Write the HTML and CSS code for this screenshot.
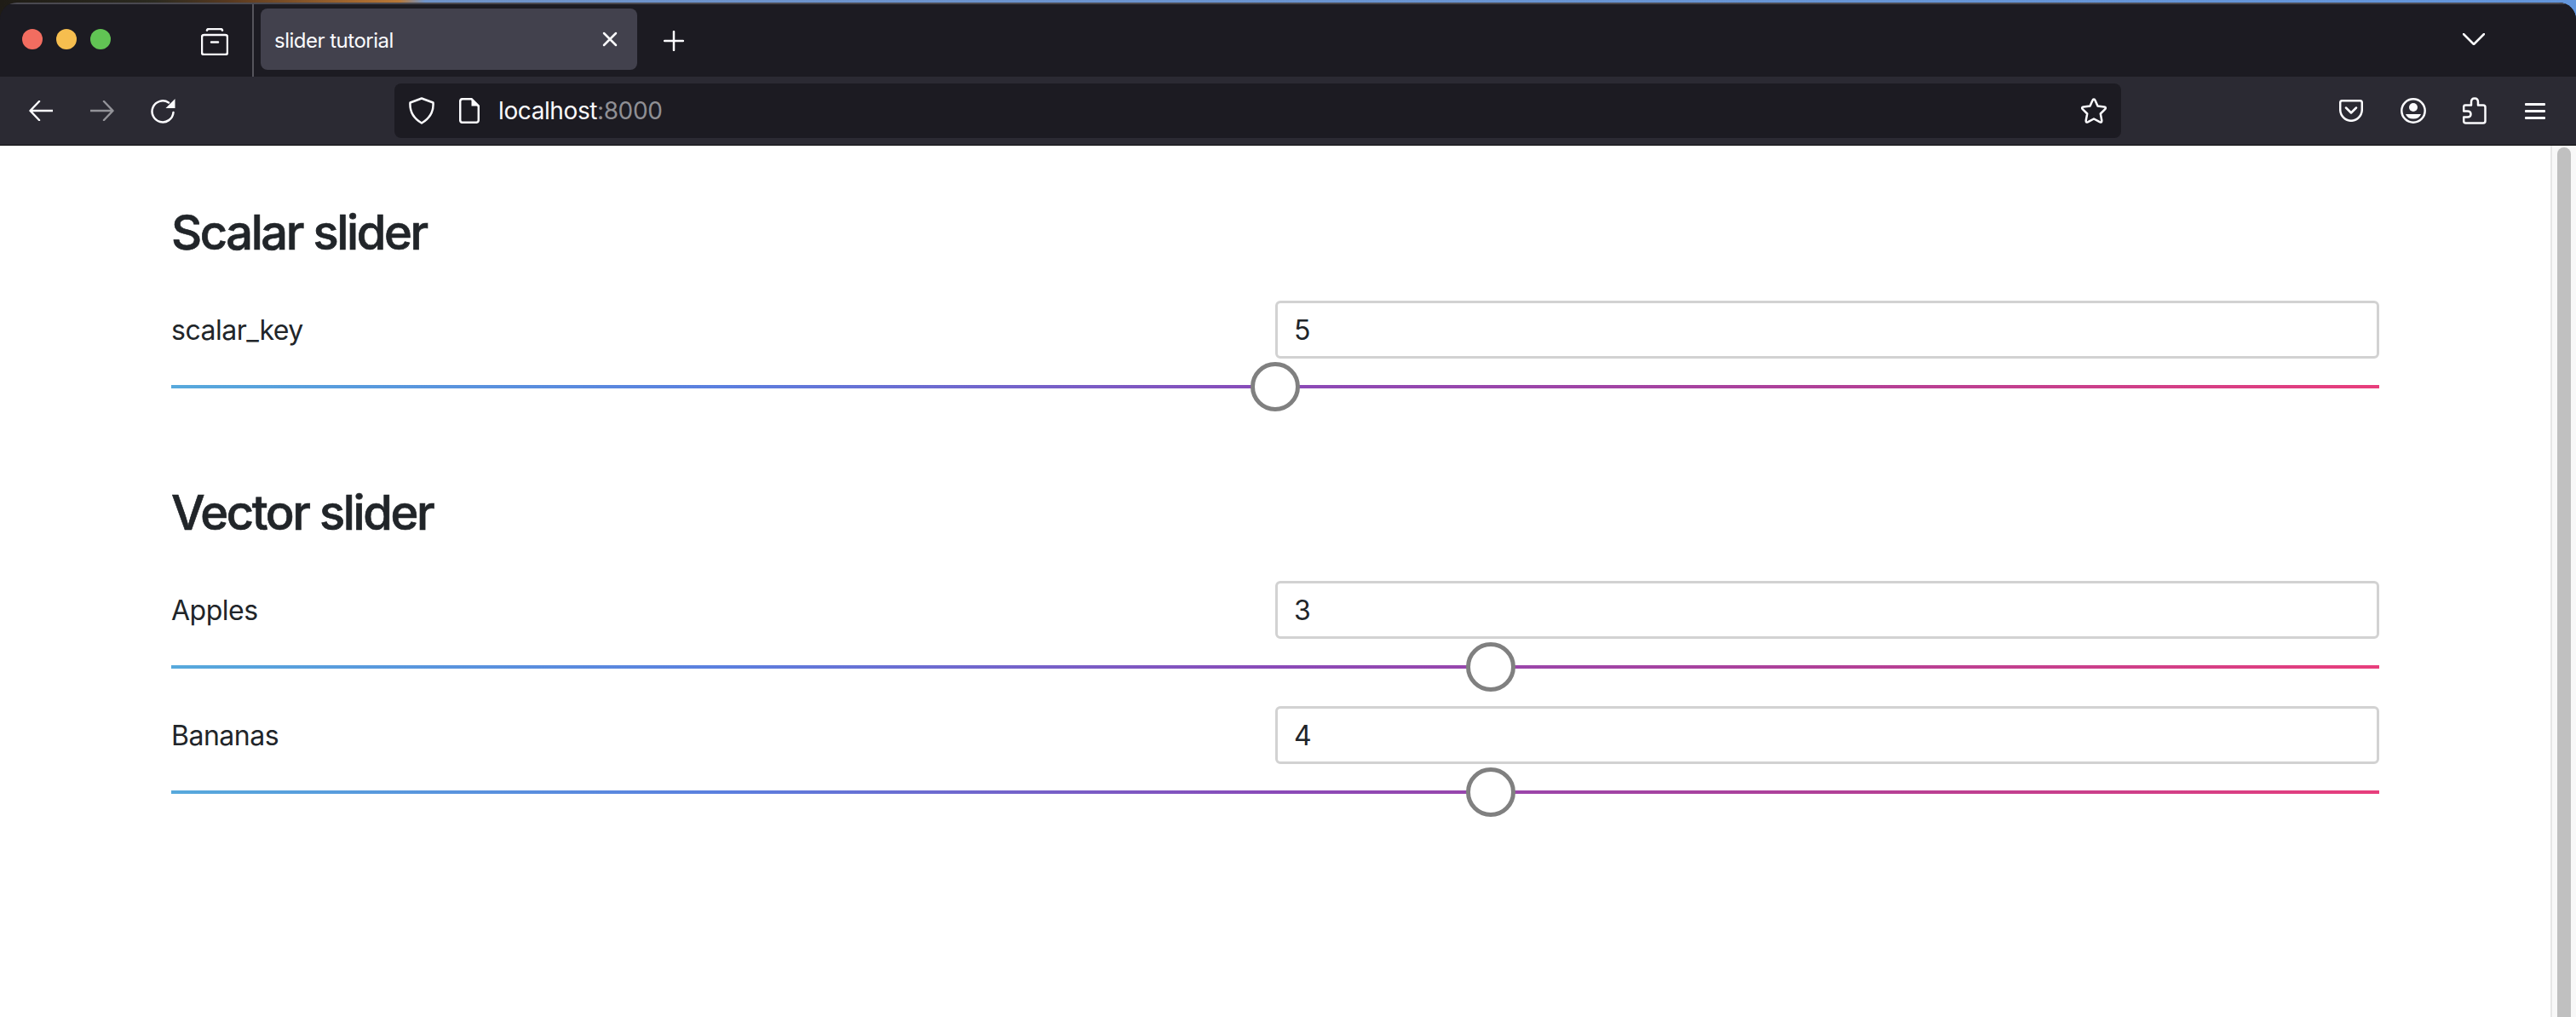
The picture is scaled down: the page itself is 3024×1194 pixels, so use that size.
FILE: index.html
```html
<!DOCTYPE html>
<html lang="en">
<head>
<meta charset="utf-8">
<title>slider tutorial</title>
<link rel="stylesheet" href="styles.css">
</head>
<body>
<div class="window">
  <header class="titlebar">
    <div class="lights">
      <span class="light red"></span>
      <span class="light yellow"></span>
      <span class="light green"></span>
    </div>
    <svg class="ico view" width="32" height="32" viewBox="0 0 32 32"><path d="M7 2.500Q7.500 1 9 1H23Q24.500 1 25 2.500M3.500 8H28.500Q31 8 31 10.500V28.500Q31 31 28.500 31H3.500Q1 31 1 28.500V10.500Q1 8 3.500 8ZM12 16.500H20" /></svg>
    <div class="tab">
      <span class="tab-title">slider tutorial</span>
      <svg class="ico tab-close" width="18" height="18" viewBox="0 0 18 18"><path d="M2 2L16 16M16 2L2 16"/></svg>
    </div>
    <svg class="ico newtab" width="24" height="24" viewBox="0 0 24 24"><path d="M12 1V23M1 12H23"/></svg>
    <svg class="ico tabs-menu" width="26" height="14" viewBox="0 0 26 14"><path d="M1 1L13 13L25 1"/></svg>
  </header>
  <nav class="toolbar">
    <svg class="ico back" width="28" height="24" viewBox="0 0 28 24"><path d="M28 12H2M12 1L1.500 12L12 23"/></svg>
    <svg class="ico forward dim" width="28" height="24" viewBox="0 0 28 24"><path d="M0 12H26M16 1L26.500 12L16 23"/></svg>
    <svg class="ico reload" width="30" height="30" viewBox="0 0 30 30"><path d="M26.500 17A12.500 12.500 0 1 1 21 5.500"/><path class="solid" d="M28.500 1V12H17.500Z"/></svg>
    <div class="urlbar">
      <svg class="ico shield" width="30" height="32" viewBox="0 0 30 32"><path d="M15 1.500L28.500 6.500Q29.500 22 15 30.500Q0.500 22 1.500 6.500Z"/></svg>
      <svg class="ico page" width="24" height="30" viewBox="0 0 24 30"><path d="M4 1.200H14.500L22.800 9.500V26Q22.800 28.800 20 28.800H4Q1.200 28.800 1.200 26V4Q1.200 1.200 4 1.200Z"/><path class="solid" d="M14.500 1.200L22.800 9.500H14.500Z"/></svg>
      <span class="url">localhost<span class="url-port">:8000</span></span>
      <svg class="ico star" width="32" height="32" viewBox="0 0 32 32"><path d="M16 2.500Q17 2.500 17.500 3.800L20.500 10.500L28.200 11.500Q31 12 29.200 14.200L23.800 19.500L25.300 27.500Q25.500 30.500 22.800 29.200L16 25.500L9.200 29.200Q6.500 30.500 6.700 27.500L8.200 19.500L2.800 14.200Q1 12 3.800 11.500L11.500 10.500L14.500 3.800Q15 2.500 16 2.500Z"/></svg>
    </div>
    <svg class="ico pocket" width="28" height="26" viewBox="0 0 28 26"><path d="M3.500 1.200H24.500Q26.800 1.200 26.800 3.500V11.500C26.800 19 21 24.800 14 24.800C7 24.800 1.200 19 1.200 11.500V3.500Q1.200 1.200 3.500 1.200ZM8 9.500L14 15.500L20 9.500"/></svg>
    <svg class="ico profile" width="30" height="30" viewBox="0 0 30 30"><circle cx="15" cy="15" r="13.700"/><circle class="solid" cx="15" cy="11" r="5"/><path class="solid" d="M6 19H24Q22 24.500 15 24.500Q8 24.500 6 19Z"/></svg>
    <svg class="ico ext" width="28" height="32" viewBox="0 0 28 32"><path d="M3 9.500H10V6Q10 1.500 14 1.500Q18 1.500 18 6V9.500H24Q26.500 9.500 26.500 12V28Q26.500 30.500 24 30.500H3.500Q1.200 30.500 1.200 28V23.500H5.500Q9.500 23.500 9.500 20Q9.500 16.500 5.500 16.500H1.200V11.500Q1.200 9.500 3 9.500Z"/></svg>
    <div class="burger"><span></span><span></span><span></span></div>
  </nav>
  <div class="viewport">
    <main class="content">
      <section class="group">
        <h2>Scalar slider</h2>
        <div class="field">
          <div class="field-head">
            <label class="field-label" for="scalar">scalar_key</label>
            <input class="field-input" id="scalar" type="text" value="5">
          </div>
          <input class="range" type="range" min="0" max="10" value="5" aria-label="scalar_key">
        </div>
      </section>
      <section class="group">
        <h2>Vector slider</h2>
        <div class="field">
          <div class="field-head">
            <label class="field-label" for="apples">Apples</label>
            <input class="field-input" id="apples" type="text" value="3">
          </div>
          <input class="range" type="range" min="0" max="5" value="3" aria-label="Apples">
        </div>
        <div class="field">
          <div class="field-head">
            <label class="field-label" for="bananas">Bananas</label>
            <input class="field-input" id="bananas" type="text" value="4">
          </div>
          <input class="range" type="range" min="0" max="6.6667" step="any" value="4" aria-label="Bananas">
        </div>
      </section>
    </main>
    <div class="scrollbar"><div class="scroll-thumb"></div></div>
  </div>
</div>
</body>
</html>
```
FILE: styles.css
```css
* { box-sizing: border-box; }
html, body { height: 100%; }
body {
  margin: 0;
  overflow: hidden;
  padding-top: 3px;
  background: linear-gradient(90deg, #1f1c16 0%, #2b2a20 6%, #5a3a20 9%, #a86a30 14%, #b87838 15.500%, #6f93c9 16.500%, #6396dc 100%);
  font-family: Inter, "Liberation Sans", sans-serif;
}
.window {
  height: 1191px;
  display: flex;
  flex-direction: column;
  overflow: hidden;
  border-radius: 20px 20px 0 0;
  background: #1c1b22;
}
.ico { display: block; flex: none; fill: none; stroke: #fbfbfe; stroke-width: 2.500; stroke-linecap: round; stroke-linejoin: round; }
.ico .solid { fill: #fbfbfe; stroke: none; }
.ico.dim { opacity: .5; }

.titlebar {
  height: 87px;
  display: flex;
  align-items: center;
  background: #1c1b22;
  border-top: 2px solid #4a4950;
}
.lights { display: flex; gap: 16px; margin-left: 26px; margin-top: -3px; }
.light { width: 24px; height: 24px; border-radius: 50%; }
.red { background: #f26d60; }
.yellow { background: #f6be4f; }
.green { background: #61c454; }
.view { margin-left: 106px; margin-top: 2px; }
.tab {
  align-self: flex-start;
  margin-top: 5px;
  margin-left: 38px;
  width: 442px;
  height: 72px;
  display: flex;
  align-items: center;
  padding: 0 23px 0 16px;
  border-radius: 8px;
  background: #42414d;
  position: relative;
}
.tab::before {
  content: "";
  position: absolute;
  left: -10px;
  top: -5px;
  width: 2px;
  height: 85px;
  background: #55545c;
}
.tab-title { flex: 1; margin-top: 3px; color: #fbfbfe; font-size: 24px; line-height: 32px; letter-spacing: -.5px; }
.newtab { margin-left: 31px; }
.tabs-menu { margin-left: auto; margin-right: 107px; margin-top: -4px; }

.toolbar {
  height: 80px;
  flex: none;
  display: flex;
  align-items: center;
  background: #2b2a33;
  padding: 0 36px 0 34px;
}
.forward { margin-left: 44px; }
.reload { margin-left: 43px; }
.urlbar {
  width: 2028px;
  height: 64px;
  margin-left: 256px;
  display: flex;
  align-items: center;
  padding: 0 16px 0 17px;
  border-radius: 8px;
  background: #1c1b22;
}
.page { margin-left: 29px; }
.url { margin-left: 22px; flex: 1; color: #fbfbfe; font-size: 28px; line-height: 36px; letter-spacing: -.4px; }
.url-port { color: #8f8f94; }
.pocket { margin-left: 256px; }
.profile { margin-left: 44px; }
.ext { margin-left: 43px; }
.burger { margin-left: 45px; width: 24px; display: flex; flex-direction: column; gap: 5px; }
.burger span { height: 3px; background: #fbfbfe; border-radius: 1px; }

.viewport {
  flex: 1;
  min-height: 0;
  display: flex;
  background: #fff;
  border-top: 1px solid #0c0c0d;
}
.content { flex: 1; padding: 69px 201px 0 201px; }
.group { margin-bottom: 86px; }
h2 {
  margin: 0 0 46px;
  color: #212529;
  font-size: 56px;
  line-height: 67px;
  font-weight: 500;
  letter-spacing: -2.400px;
  -webkit-text-stroke: .7px #212529;
}
.field + .field { margin-top: 17px; }
.field-head { display: flex; align-items: center; }
.field-label { flex: 1; margin-top: 2px; color: #212529; font-size: 32px; line-height: 48px; letter-spacing: -.5px; }
.field-input {
  width: 1296px;
  height: 68px;
  padding: 0 19px;
  border: 3px solid #d2d2d2;
  border-radius: 6px;
  color: #212529;
  background: #fff;
  font: 400 32px/48px Inter, "Liberation Sans", sans-serif;
}
.range {
  display: block;
  width: 100%;
  height: 58px;
  margin: 4px 0 0;
  background: transparent;
  -webkit-appearance: none;
  appearance: none;
}
.range::-webkit-slider-runnable-track {
  height: 4px;
  background: linear-gradient(90deg, #57a9dc 0%, #5b7fdf 25%, #8a4ab8 50%, #b04098 75%, #e83e7c 100%);
}
.range::-webkit-slider-thumb {
  -webkit-appearance: none;
  appearance: none;
  width: 58px;
  height: 58px;
  margin-top: -27px;
  border: 5px solid #808080;
  border-radius: 50%;
  background: #fff;
}
.scrollbar {
  flex: none;
  width: 30px;
  padding: 2px 6px 0 6px;
  background: #f8f8f8;
  border-left: 2px solid #e6e6e6;
}
.scroll-thumb { height: 100%; border-radius: 8px 8px 0 0; background: #c0c0c0; }
```
